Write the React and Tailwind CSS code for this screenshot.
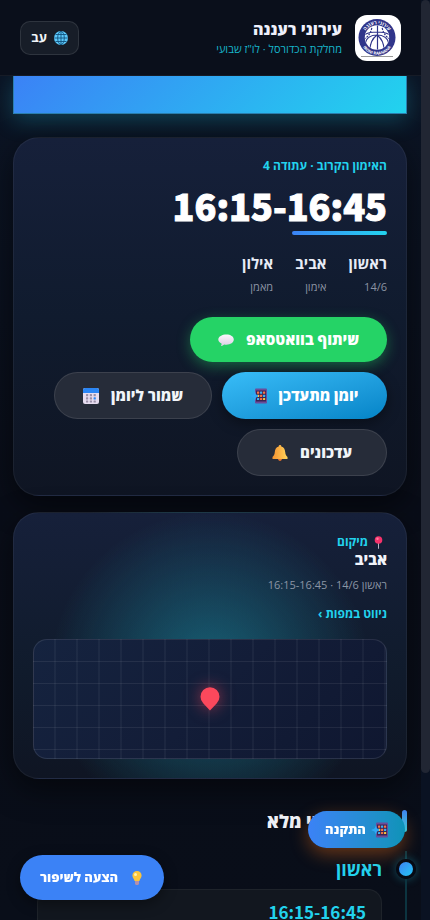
const FONT = "font-['Open_Sans','Noto_Sans',sans-serif]";
const DIGITS = "font-['Noto_Sans_CJK_KR','Open_Sans',sans-serif]";

const DETAILS = [
  { title: 'ראשון', sub: '14/6' },
  { title: 'אביב', sub: 'אימון' },
  { title: 'אילון', sub: 'מאמן' },
];

function ClubLogo() {
  return (
    <svg className="w-full h-full" viewBox="0 0 46 46" aria-label="עירוני רעננה">
      <defs>
        <path id="arc-top" d="M8.8 22.500 A13.200 13.200 0 0 1 35.200 22.500" />
        <path id="arc-bottom" d="M5.300 23 A16.700 16.700 0 0 0 38.700 23" />
        <clipPath id="ball">
          <circle cx="22" cy="22.500" r="12" />
        </clipPath>
      </defs>
      <circle cx="22" cy="22.500" r="18.500" fill="#30358a" />
      <circle cx="22" cy="22.500" r="12.200" fill="#fff" />
      <g clipPath="url(#ball)">
        <path d="M9 9h27v5a24 24 0 0 0-27 0z" fill="#30358a" />
        <g fill="none" stroke="#30358a" strokeWidth="1.2">
          <path d="M22.500 10v25M9 20c6-4 20-4 26 0" strokeDasharray="none" />
          <path d="M10 29c1-6 6-9 12-9s11 3 12 9M15 35c0-7 3-12 7-15 4 3 7 8 7 15" />
          <path d="M9 24c4-2 7-6 8-12M35 24c-4-2-7-6-8-12" strokeDasharray="2 1" />
        </g>
      </g>
      <text fill="#fff" fontSize="5" fontWeight="700" textAnchor="middle" className="font-['Open_Sans',sans-serif]">
        <textPath href="#arc-top" startOffset="50%">עירוני רעננה</textPath>
      </text>
      <text fill="#fff" fontSize="4" fontWeight="700" textAnchor="middle" direction="ltr" className="font-['Open_Sans',sans-serif]">
        <textPath href="#arc-bottom" startOffset="50%">IRONI RAANANA</textPath>
      </text>
      <path d="M6 41.500h32" stroke="#999" strokeWidth="1" />
    </svg>
  );
}

function GlobeIcon() {
  return (
    <svg className="w-[14px] h-[14px]" viewBox="0 0 14 14">
      <circle cx="7" cy="7" r="7" fill="#5cc8fa" />
      <g fill="none" stroke="#12527e" strokeWidth="0.9">
        <ellipse cx="7" cy="7" rx="3.300" ry="6.600" />
        <path d="M7 0v14M0.300 7h13.400M1.500 3.500h11M1.500 10.500h11" />
      </g>
    </svg>
  );
}

function SpeechIcon() {
  return (
    <svg className="w-4 h-4" viewBox="0 0 16 16">
      <defs>
        <linearGradient id="speech" x1="0" y1="0" x2="0" y2="1">
          <stop offset="0" stopColor="#fbf6fd" />
          <stop offset="1" stopColor="#dccfe6" />
        </linearGradient>
      </defs>
      <path d="M8.500 2.500c4 0 7.300 2 7.300 5s-3.300 5.200-7.300 5.200c-.8 0-1.600-.1-2.300-.3-.9.900-2 1.500-3.200 1.500.5-.7.700-1.600.5-2.500C1.500 10.500.3 9.100.3 7.500c0-3 3.900-5 8.200-5z" fill="url(#speech)" />
    </svg>
  );
}

function PhoneIcon() {
  const dots = ['#f97343', '#3bb3f5', '#f97343', '#f5c542', '#f97343', '#3bb3f5', '#3bb3f5', '#f97343', '#f5c542'];
  return (
    <svg className="w-4 h-4 overflow-visible" viewBox="0 0 16 16">
      <rect x="4" y="0.500" width="12" height="15" rx="1" fill="#6b4c9a" />
      <rect x="5" y="2.500" width="10" height="11" fill="#3b2454" />
      {dots.map((color, i) => (
        <rect key={i} x={6 + (i % 3) * 3} y={3.5 + Math.floor(i / 3) * 3.2} width="2.200" height="2.200" rx="0.500" fill={color} />
      ))}
      <path d="M-1 8l3.500-1.500 1.500-3 1 3 2 .5v2l-2 .5-1 3-1.500-3z" fill="#2fa8f5" />
    </svg>
  );
}

function CalendarIcon() {
  return (
    <svg className="w-4 h-4" viewBox="0 0 16 16">
      <rect width="16" height="16" rx="2" fill="#e6dcef" />
      <path d="M2 0h12a2 2 0 0 1 2 2v3H0V2a2 2 0 0 1 2-2z" fill="#2b86f5" />
      {[0, 1, 2].map((row) =>
        [0, 1, 2].map((col) => (
          <rect
            key={`${row}-${col}`}
            x={3 + col * 3.8}
            y={6 + row * 3.2}
            width="2.200"
            height="2.200"
            rx="0.500"
            fill={row === 1 && col === 2 ? '#2b86f5' : '#9a8fa8'}
          />
        ))
      )}
    </svg>
  );
}

function BellIcon() {
  return (
    <svg className="w-4 h-4" viewBox="0 0 16 16">
      <defs>
        <linearGradient id="bell">
          <stop offset="0" stopColor="#f59331" />
          <stop offset="1" stopColor="#ffd35a" />
        </linearGradient>
      </defs>
      <circle cx="8" cy="14.200" r="1.700" fill="#e0702f" />
      <path d="M8 0c.9 0 1.300.6 1.300 1.400C12 2 13 4.200 13.200 7c.2 2.600 1 3.800 2.300 5v2H.5v-2c1.300-1.200 2.100-2.400 2.300-5C3 4.200 4 2 6.700 1.400 6.700.6 7.100 0 8 0z" fill="url(#bell)" />
    </svg>
  );
}

function PinIcon() {
  return (
    <svg className="w-[13px] h-[13px]" viewBox="0 0 13 13">
      <path d="M6 6h1v6.500l-.5.5-.5-.5z" fill="#b9b4c4" />
      <circle cx="6.500" cy="4" r="3.800" fill="#f5326b" />
      <circle cx="5.500" cy="2.800" r="1.200" fill="#ff7d9f" />
    </svg>
  );
}

function BulbIcon() {
  return (
    <svg className="w-[14px] h-[14px]" viewBox="0 0 14 14">
      <path d="M7 0a4.600 4.600 0 0 1 4.600 4.600c0 2.200-1.700 3.200-2.200 5.400H4.600C4.100 7.800 2.400 6.800 2.400 4.600A4.600 4.600 0 0 1 7 0z" fill="#fbc53c" />
      <circle cx="5.500" cy="3.500" r="1.500" fill="#fff0ae" />
      <path d="M5 10h4v3L8 14H6l-1-1z" fill="#b18fae" />
    </svg>
  );
}

function Header() {
  return (
    <header className="h-[76px] shrink-0 flex items-center px-5 border-b border-white/5 bg-[#0a0f1b]">
      <div className="w-[46px] h-[46px] rounded-xl bg-white overflow-hidden">
        <ClubLogo />
      </div>
      <div className="flex-1 px-[13px]">
        <h1 className="text-[16px] leading-[22px] font-extrabold text-[#eef0fb]">עירוני רעננה</h1>
        <p className="text-[11px] leading-[18px] font-medium text-[#17b5ca]">מחלקת הכדורסל · לו"ז שבועי</p>
      </div>
      <button className="h-[34px] w-[59px] flex items-center justify-center gap-[7px] rounded-[10px] border border-white/10 bg-[#171d28] text-[13px] font-bold text-slate-100">
        <GlobeIcon />
        עב
      </button>
    </header>
  );
}

function NextPractice() {
  const pill = 'flex items-center justify-center gap-3 rounded-full text-[15px] font-extrabold';
  return (
    <section className="rounded-[26px] border border-white/5 bg-linear-to-b from-[#16203a] via-[#101b2e] to-[#0f1523] shadow-[0_10px_30px_rgba(0,0,0,0.5)] px-[19px] pt-[18px] pb-[19px]">
      <p className="text-[12px] leading-5 font-bold text-[#22d3ee]">האימון הקרוב · עתודה 4</p>
      <div className={`mt-[6px] text-[36px] leading-[46px] font-black text-white [-webkit-text-stroke:1px_white] ${DIGITS}`}>
        <span dir="ltr">16:15-16:45</span>
      </div>
      <div className="mt-[3px] w-[95px] h-1 rounded-full bg-linear-to-l from-[#22d3ee] to-[#3b82f6]" />
      <div className="mt-4 flex gap-[22px]">
        {DETAILS.map((item) => (
          <div key={item.title}>
            <div className="text-[15px] leading-6 font-bold text-[#e8ecf6]">{item.title}</div>
            <div className="mt-[2px] text-[11px] leading-5 font-medium text-[#8b93a3]">{item.sub}</div>
          </div>
        ))}
      </div>
      <div className="mt-5 flex flex-wrap gap-[10px]">
        <button className={`${pill} w-[197px] h-[45px] bg-[#25d366] text-white shadow-[0_4px_14px_rgba(37,211,102,0.4)]`}>
          שיתוף בוואטסאפ
          <SpeechIcon />
        </button>
        <button className={`${pill} w-[165px] h-[47px] bg-linear-to-br from-[#38bdf8] to-[#0284c7] text-white shadow-[0_4px_14px_rgba(0,0,0,0.4)]`}>
          יומן מתעדכן
          <PhoneIcon />
        </button>
        <button className={`${pill} w-[158px] h-[47px] border border-white/10 bg-[#262c39] text-slate-100`}>
          שמור ליומן
          <CalendarIcon />
        </button>
        <button className={`${pill} w-[150px] h-[47px] border border-white/10 bg-[#262c39] text-slate-100`}>
          עדכונים
          <BellIcon />
        </button>
      </div>
    </section>
  );
}

function Location() {
  return (
    <section className="rounded-[26px] border border-white/5 bg-[radial-gradient(circle_at_50%_60%,rgba(34,211,238,0.38),transparent_160px),linear-gradient(180deg,#16203a,#101b2c_60%,#0f1523)] shadow-[0_10px_30px_rgba(0,0,0,0.5)] px-[19px] pt-[21px] pb-[19px]">
      <p className="flex items-center gap-1 ps-[2px] text-[12px] leading-4 font-bold text-[#22d3ee]">
        <PinIcon />
        מיקום
      </p>
      <h2 className="text-[15px] leading-[18px] font-extrabold text-[#f1f4fb]">אביב</h2>
      <p className="mt-[7px] text-[11px] leading-5 font-medium text-[#8b95a5]">
        ראשון 14/6 · <span dir="ltr">16:15-16:45</span>
      </p>
      <a href="#map" className="mt-[10px] block text-[12px] leading-[18px] font-bold text-[#22d3ee]">ניווט במפות ›</a>
      <div
        id="map"
        className="mt-4 h-[120px] rounded-[14px] border border-white/10 flex items-center justify-center bg-[repeating-linear-gradient(180deg,transparent_0_21px,rgba(255,255,255,0.07)_21px_22px),repeating-linear-gradient(90deg,transparent_0_20px,rgba(255,255,255,0.04)_20px_22px),linear-gradient(135deg,#15233f,#131d38_50%,#0f1730)]"
      >
        <svg className="w-5 h-6 drop-shadow-[0_0_8px_rgba(251,72,92,0.6)]" viewBox="0 0 20 24">
          <path d="M10 23.500L3.400 16.500a9.500 9.500 0 1 1 13.200 0z" fill="#fb485c" />
        </svg>
      </div>
    </section>
  );
}

function Schedule() {
  return (
    <section>
      <h2 className="flex items-center gap-3 text-[18px] leading-6 font-extrabold text-[#eef0f6]">
        <span className="w-[5px] h-[22px] rounded-full bg-linear-to-b from-[#3b82f6] to-[#22d3ee]" />
        לו"ז שבועי מלא
      </h2>
      <div className="mt-[18px] flex gap-[23px]">
        <div className="w-[2px] flex flex-col items-center">
          <div className="w-[2px] h-2 bg-[#0c3440]" />
          <div className="w-5 h-5 shrink-0 -mx-[9px] rounded-full border-[3px] border-[#060a14] bg-linear-to-br from-[#3b82f6] to-[#22c5f2] shadow-[0_0_10px_rgba(34,211,238,0.35)]" />
          <div className="w-[2px] flex-1 bg-[#0c3440]" />
        </div>
        <div className="flex-1 pe-6">
          <h3 className="mt-1 text-[18px] leading-7 font-bold text-[#22d3ee]">ראשון</h3>
          <div className="mt-[6px] h-[100px] rounded-[14px] border border-white/5 bg-[#12171f] px-[15px] pt-[10px]">
            <div className={`text-[17px] leading-6 font-bold text-[#22d3ee] ${DIGITS}`}>
              <span dir="ltr">16:15-16:45</span>
            </div>
          </div>
        </div>
      </div>
    </section>
  );
}

export default function App() {
  return (
    <div dir="ltr" className={`h-screen flex overflow-hidden bg-[#090e19] ${FONT}`}>
      <div dir="rtl" className="flex-1 min-w-0 flex flex-col">
        <Header />
        <main className="flex-1 min-h-0 overflow-hidden ps-[14px] pe-[13px] bg-linear-to-b from-[#0b1424] via-[#090d18] to-[#090e19]">
          <div className="h-[38px] border border-t-0 border-[#2b7fae] bg-[linear-gradient(135deg,#3b82f6,#22d3ee)] shadow-[0_6px_22px_rgba(34,211,238,0.25)]" />
          <div className="mt-[23px] flex flex-col gap-4">
            <NextPractice />
            <Location />
          </div>
          <div className="mt-[30px]">
            <Schedule />
          </div>
        </main>
      </div>
      <div className="w-[9px] bg-[#0a1222]">
        <div className="h-[84%] rounded-full bg-[#212633]" />
      </div>

      {/* Floating actions */}
      <button
        dir="rtl"
        className="fixed right-[25px] bottom-[72px] w-[97px] h-[37px] flex items-center justify-center gap-[6px] rounded-full bg-linear-to-r from-[#3b82f6] to-[#0e93b8] text-[13px] font-extrabold text-white shadow-[0_6px_18px_rgba(249,115,22,0.4)]"
      >
        <PhoneIcon />
        התקנה
      </button>
      <button
        dir="rtl"
        className="fixed left-5 bottom-5 w-36 h-[45px] flex items-center justify-center gap-3 rounded-full bg-[#3b82f6] text-[13px] font-extrabold text-white shadow-[0_4px_14px_rgba(0,0,0,0.4)]"
      >
        <BulbIcon />
        הצעה לשיפור
      </button>
    </div>
  );
}
